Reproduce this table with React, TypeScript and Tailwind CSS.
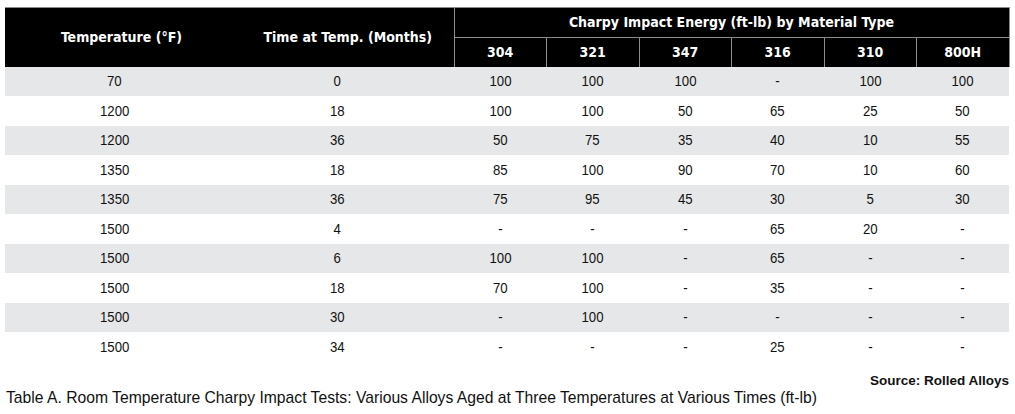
import React from 'react';

const COLS = ['304', '321', '347', '316', '310', '800H'];

const ROWS: string[][] = [
  ['70', '0', '100', '100', '100', '-', '100', '100'],
  ['1200', '18', '100', '100', '50', '65', '25', '50'],
  ['1200', '36', '50', '75', '35', '40', '10', '55'],
  ['1350', '18', '85', '100', '90', '70', '10', '60'],
  ['1350', '36', '75', '95', '45', '30', '5', '30'],
  ['1500', '4', '-', '-', '-', '65', '20', '-'],
  ['1500', '6', '100', '100', '-', '65', '-', '-'],
  ['1500', '18', '70', '100', '-', '35', '-', '-'],
  ['1500', '30', '-', '100', '-', '-', '-', '-'],
  ['1500', '34', '-', '-', '-', '25', '-', '-'],
];

const narrow = { fontFamily: '"Liberation Sans Narrow", "DejaVu Sans Condensed", "Liberation Sans", sans-serif' };
const sans = { fontFamily: '"Liberation Sans", Arial, sans-serif' };

export default function App() {
  return (
    <div className="w-[1015px] h-[414px] bg-white pt-[7px] px-[5px]" style={sans}>
      <table className="w-[1004px] table-fixed border-collapse">
        <colgroup>
          <col className="w-[229px]" />
          <col className="w-[220px]" />
          {COLS.map(c => (
            <col key={c} className="w-[92.5px]" />
          ))}
        </colgroup>
        <thead className="bg-black text-white" style={narrow}>
          <tr className="h-[30px]">
            <th rowSpan={2} className="border-t border-[#8c8c8c] text-[14px] font-bold pl-[4px]">
              Temperature (°F)
            </th>
            <th rowSpan={2} className="border-t border-r border-[#8c8c8c] text-[14px] font-bold pl-[8px]">
              Time at Temp. (Months)
            </th>
            <th colSpan={6} className="border-t border-r border-b border-[#8c8c8c] text-[14px] font-bold">
              Charpy Impact Energy (ft-lb) by Material Type
            </th>
          </tr>
          <tr className="h-[29px]">
            {COLS.map(c => (
              <th key={c} className="border-r border-[#8c8c8c] text-[14px] font-bold">
                {c}
              </th>
            ))}
          </tr>
        </thead>
        <tbody className="text-[15px] text-[#111]">
          {ROWS.map((row, i) => (
            <tr key={i} className={`h-[29.5px] ${i % 2 === 0 ? 'bg-[#e6e7e8]' : 'bg-white'}`}>
              {row.map((cell, j) => (
                <td
                  key={j}
                  className={`text-center ${j === 0 ? 'pr-[10px]' : j === 1 ? 'pr-[14px]' : ''}`}
                >
                  <span className="inline-block scale-x-[0.88]">{cell}</span>
                </td>
              ))}
            </tr>
          ))}
        </tbody>
      </table>
      <div className="flex justify-end pt-[11px] pr-[1px]">
        <span className="text-[13.5px] font-bold text-[#111] leading-[15px]">Source: Rolled Alloys</span>
      </div>
      <p className="text-[15.7px] text-[#111] leading-[18px] pt-[1px] pl-[1px]">
        Table A. Room Temperature Charpy Impact Tests: Various Alloys Aged at Three Temperatures at Various Times (ft-lb)
      </p>
    </div>
  );
}
